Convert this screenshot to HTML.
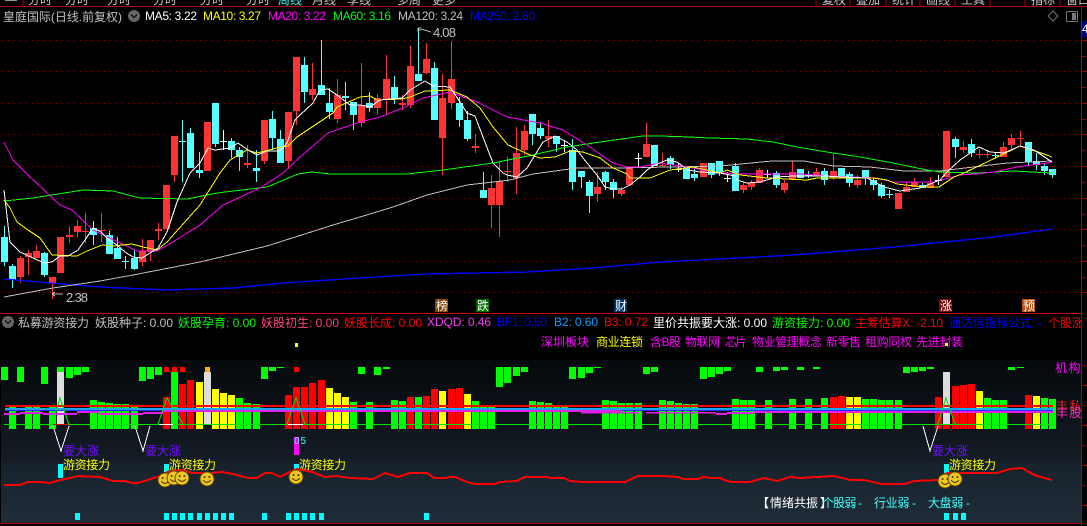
<!DOCTYPE html>
<html><head><meta charset="utf-8"><title>皇庭国际</title>
<style>
html,body{margin:0;padding:0;background:#000;width:1087px;height:526px;overflow:hidden}
svg{display:block}
text{font-family:"Liberation Sans","WenQuanYi Zen Hei","Noto Sans CJK SC",sans-serif;font-size:12px}
</style></head><body>
<svg width="1087" height="526" viewBox="0 0 1087 526" xmlns="http://www.w3.org/2000/svg" shape-rendering="crispEdges">
<defs>
<linearGradient id="g1" x1="0" y1="0" x2="0" y2="1"><stop offset="0" stop-color="#05090c"/><stop offset="1" stop-color="#141c25"/></linearGradient>
<linearGradient id="g2" x1="0" y1="0" x2="0" y2="1"><stop offset="0" stop-color="#16212b"/><stop offset="1" stop-color="#1f2d39"/></linearGradient>
<clipPath id="top"><rect x="0" y="0" width="1087" height="6"/></clipPath>
<clipPath id="rt"><rect x="0" y="0" width="1081" height="526"/></clipPath>
<g id="sm" shape-rendering="auto"><circle r="7" fill="#f2c81e" stroke="#5c4a08" stroke-width="1"/><circle cx="-2.4" cy="-2" r="1" fill="#3a2a00"/><circle cx="2.4" cy="-2" r="1" fill="#3a2a00"/><path d="M-3.8 1.2Q0 5.6 3.8 1.2" fill="none" stroke="#3a2a00" stroke-width="1"/></g>
</defs>
<rect width="1087" height="526" fill="#000"/>

<!-- toolbar -->
<g clip-path="url(#top)" fill="#c8c8c8">
<rect x="5" y="0" width="12" height="1" fill="#999"/>
<text x="28" y="4">分时</text><text x="65" y="4">分时</text><text x="107" y="4">分时</text><text x="153" y="4">分时</text><text x="200" y="4">分时</text><text x="246" y="4">分时</text><text x="278" y="4" fill="#4ff">周线</text><text x="312" y="4">月线</text><text x="347" y="4">季线</text><text x="397" y="4">多周</text><text x="432" y="4">更多</text>
<text x="822" y="4">复权</text><text x="856" y="4">叠加</text><text x="892" y="4">统计</text><text x="926" y="4">画线</text><text x="961" y="4">工具</text><text x="1031" y="4">指标</text><text x="1066" y="4">窗口</text>
</g>
<path d="M23 0v6M816 0v6M850 0v6M886 0v6M920 0v6M955 0v6M990 0v6M1025 0v6M1060 0v6" stroke="#b00000"/>
<rect x="0" y="6" width="1087" height="1" fill="#b00000"/>

<!-- grid -->
<g stroke="#a00000" stroke-dasharray="1 5" fill="none">
<path d="M2 40.5H1081M2 71.5H1081M2 103.5H1081M2 134.5H1081M2 166.5H1081M2 198.5H1081M2 229.5H1081M2 261.5H1081M2 292.5H1081"/>
</g>
<rect x="1081" y="6" width="1" height="520" fill="#b00000"/>
<path d="M1082 40.5h5M1082 56.5h3M1082 71.5h5M1082 87.5h3M1082 103.5h5M1082 119.5h3M1082 134.5h5M1082 150.5h3M1082 166.5h5M1082 182.5h3M1082 198.5h5M1082 214.5h3M1082 229.5h5M1082 245.5h3M1082 261.5h5M1082 277.5h3M1082 292.5h5M1082 385.5h5M1082 405.5h3M1082 425.5h5M1082 445.5h3M1082 465.5h5M1082 365.5h3M1082 485.5h3M1082 505.5h5" stroke="#b00000"/>
<rect x="1082" y="21" width="5" height="16" fill="#000080"/>
<text x="1082" y="33" fill="#fff">4</text>

<!-- header row 1 -->
<text x="3" y="21" fill="#c0c0c0" textLength="119" lengthAdjust="spacing">皇庭国际(日线.前复权)</text>
<circle cx="134" cy="16" r="6" fill="#666" shape-rendering="auto"/>
<path d="M131 14.5l3 3 3-3" stroke="#111" stroke-width="1.3" fill="none" shape-rendering="auto"/>
<text x="145" y="20" fill="#fff" textLength="52">MA5: 3.22</text>
<text x="203" y="20" fill="#ff0" textLength="58">MA10: 3.27</text>
<text x="268" y="20" fill="#f0f" textLength="58">MA20: 3.22</text>
<text x="333" y="20" fill="#0f0" textLength="58">MA60: 3.16</text>
<text x="398" y="20" fill="#c0c0c0" textLength="65">MA120: 3.24</text>
<text x="470" y="20" fill="#00f" textLength="65">MA250: 2.80</text>
<path d="M1053 11l5 5-5 5-5-5z" fill="none" stroke="#777" shape-rendering="auto"/>
<rect x="1066.5" y="11.500" width="11" height="10" fill="none" stroke="#777" rx="1"/>
<rect x="1072" y="13" width="4" height="7" fill="#777"/>

<!-- candles -->
<path fill="#f33" d="
M17 258h7V277h-7zM20 256h1V283h-1z
M25 253h7V257h-7zM28 250h1V275h-1z
M33 251h7V258h-7zM36 245h1V258h-1z
M49 277h7V283h-7zM52 277h1V299h-1z
M57 237h7V273h-7z
M66 235h7V237h-7zM69 226h1V243h-1z
M74 226h7V232h-7zM77 220h1V237h-1z
M82 231h7V232h-7zM85 213h1V243h-1z
M98 230h7V231h-7zM101 213h1V242h-1z
M139 251h7V262h-7zM142 239h1V266h-1z
M147 240h7V252h-7zM150 240h1V261h-1z
M155 229h7V231h-7zM158 223h1V240h-1z
M163 185h7V229h-7z
M171 136h7V175h-7zM174 136h1V182h-1z
M204 122h7V171h-7z
M244 163h7V165h-7zM247 145h1V168h-1z
M261 120h7V161h-7zM264 120h1V164h-1z
M285 112h7V161h-7zM288 112h1V169h-1z
M293 57h7V111h-7zM296 57h1V125h-1z
M309 89h7V95h-7zM312 63h1V100h-1z
M334 95h7V119h-7zM337 79h1V123h-1z
M358 105h7V123h-7zM361 63h1V127h-1z
M374 98h7V108h-7zM377 94h1V114h-1z
M383 79h7V100h-7zM386 55h1V114h-1z
M399 103h7V105h-7zM402 95h1V110h-1z
M407 66h7V105h-7zM410 46h1V108h-1z
M423 59h7V73h-7zM426 43h1V74h-1z
M439 98h7V138h-7zM442 74h1V175h-1z
M448 79h7V103h-7zM451 41h1V109h-1z
M472 146h7V148h-7zM475 134h1V153h-1z
M488 188h7V205h-7zM491 175h1V228h-1z
M496 181h7V205h-7zM499 162h1V237h-1z
M504 171h7V172h-7zM507 157h1V182h-1z
M513 153h7V178h-7zM516 127h1V194h-1z
M521 131h7V150h-7zM524 125h1V155h-1z
M545 136h7V139h-7zM548 120h1V147h-1z
M594 187h7V194h-7zM597 172h1V202h-1z
M618 190h7V194h-7zM621 187h1V196h-1z
M626 168h7V185h-7z
M643 144h7V157h-7zM646 123h1V157h-1z
M659 165h7V166h-7zM662 153h1V167h-1z
M700 163h7V177h-7z
M740 185h7V190h-7zM743 182h1V193h-1z
M748 183h7V187h-7zM751 180h1V190h-1z
M756 170h7V183h-7zM759 168h1V183h-1z
M781 183h7V190h-7zM784 180h1V193h-1z
M789 172h7V180h-7zM792 161h1V180h-1z
M813 172h7V175h-7zM816 168h1V175h-1z
M830 171h7V178h-7zM833 153h1V180h-1z
M854 180h7V185h-7zM857 175h1V188h-1z
M895 193h7V209h-7z
M903 187h7V192h-7zM906 182h1V192h-1z
M911 182h7V187h-7zM914 178h1V187h-1z
M927 183h7V188h-7zM930 177h1V188h-1z
M943 131h7V177h-7z
M960 147h7V150h-7zM963 141h1V153h-1z
M976 154h7V155h-7zM979 149h1V158h-1z
M984 154h7V155h-7zM987 150h1V158h-1z
M1000 147h7V157h-7zM1003 142h1V157h-1z
M1008 138h7V145h-7zM1011 134h1V149h-1z
M1017 138h7V139h-7zM1020 131h1V146h-1z"/>
<path fill="#55ffff" d="
M1 237h7V262h-7zM4 226h1V266h-1z
M9 266h7V280h-7zM12 264h1V288h-1z
M41 253h7V275h-7zM44 252h1V277h-1z
M90 228h7V235h-7zM93 221h1V245h-1z
M106 235h7V254h-7zM109 231h1V254h-1z
M114 248h7V259h-7zM117 237h1V259h-1z
M122 261h7V262h-7zM125 256h1V269h-1z
M131 258h7V269h-7zM134 250h1V270h-1z
M179 141h7V142h-7zM182 120h1V182h-1z
M187 133h7V168h-7zM190 128h1V168h-1z
M196 170h7V173h-7zM199 152h1V178h-1z
M212 103h7V144h-7zM215 103h1V147h-1z
M228 141h7V150h-7zM231 138h1V158h-1z
M236 150h7V157h-7zM239 147h1V171h-1z
M253 168h7V171h-7zM256 150h1V182h-1z
M269 119h7V138h-7zM272 111h1V150h-1z
M277 139h7V163h-7zM280 130h1V163h-1z
M301 65h7V92h-7zM304 57h1V103h-1z
M318 85h7V95h-7zM321 40h1V95h-1z
M326 103h7V112h-7zM329 88h1V119h-1z
M342 96h7V98h-7zM345 82h1V110h-1z
M350 102h7V115h-7zM353 102h1V130h-1z
M366 103h7V108h-7zM369 92h1V112h-1z
M391 87h7V99h-7zM394 76h1V104h-1z
M415 74h7V81h-7zM418 28h1V81h-1z
M431 68h7V120h-7zM434 62h1V120h-1z
M456 103h7V120h-7zM459 97h1V127h-1z
M464 120h7V139h-7zM467 111h1V141h-1z
M480 190h7V198h-7zM483 172h1V198h-1z
M529 114h7V134h-7zM532 114h1V145h-1z
M537 128h7V136h-7zM540 122h1V139h-1z
M553 136h7V144h-7zM556 136h1V152h-1z
M569 150h7V182h-7zM572 139h1V190h-1z
M578 171h7V177h-7zM581 171h1V188h-1z
M586 182h7V196h-7zM589 180h1V213h-1z
M602 172h7V182h-7zM605 171h1V190h-1z
M610 182h7V190h-7zM613 179h1V198h-1z
M651 145h7V166h-7z
M667 158h7V165h-7zM670 156h1V169h-1z
M683 168h7V179h-7z
M691 174h7V178h-7zM694 168h1V181h-1z
M708 163h7V175h-7zM711 163h1V178h-1z
M716 161h7V172h-7zM719 161h1V176h-1z
M732 166h7V191h-7zM735 163h1V191h-1z
M773 173h7V185h-7zM776 171h1V188h-1z
M797 169h7V178h-7z
M805 175h7V176h-7zM808 171h1V178h-1z
M821 171h7V180h-7zM824 168h1V185h-1z
M838 168h7V177h-7z
M846 174h7V183h-7zM849 172h1V187h-1z
M862 170h7V178h-7zM865 170h1V185h-1z
M870 180h7V185h-7zM873 178h1V190h-1z
M878 185h7V196h-7zM881 183h1V198h-1z
M886 194h7V195h-7zM889 190h1V198h-1z
M919 185h7V188h-7zM922 183h1V188h-1z
M952 139h7V147h-7zM955 137h1V158h-1z
M968 144h7V153h-7zM971 139h1V157h-1z
M992 155h7V156h-7zM995 153h1V158h-1z
M1025 142h7V162h-7zM1028 142h1V166h-1z
M1033 161h7V165h-7zM1036 153h1V170h-1z
M1041 166h7V171h-7zM1044 163h1V175h-1z
M1049 169h7V175h-7zM1052 169h1V178h-1z"/>
<path fill="#fff" d="M220 141h7V142h-7zM223 130h1V150h-1zM561 145h7V146h-7zM564 140h1V152h-1zM635 158h7V159h-7zM638 153h1V167h-1zM675 169h7V170h-7zM678 163h1V172h-1zM724 178h7V179h-7zM727 172h1V182h-1zM764 174h7V175h-7zM767 170h1V178h-1zM935 180h7V181h-7zM938 175h1V185h-1z"/>

<!-- moving averages -->
<g fill="none" stroke-width="1">
<polyline stroke="#0000ff" stroke-width="1.4" points="4,279 50,283 100,287 167,290 233,288 283,283 360,278 427,274 527,272 593,268 660,262 720,259 793,255 894,247 994,237 1052,229"/>
<polyline stroke="#c0c0c0" points="4,297 53,288 100,281 133,275 200,262 267,246 333,225 360,217 393,207 427,195 467,185 510,180 533,174 577,168 620,168 720,166 772,161 804,161 834,166 870,167 904,171 940,171 1007,163 1052,161"/>
<polyline stroke="#00ff00" points="4,201 33,198 83,190 113,191 140,198 187,199 217,193 267,187 298,174 312,172 330,174 407,174 443,170 493,163 533,155 567,147 600,142 643,136 660,136 690,137 710,138 747,139 773,142 797,147 827,152 860,157 893,163 927,170 940,172 977,173 1013,171 1052,173"/>
<polyline stroke="#ff00ff" points="4,142 13,160 28,175 60,205 72,210 93,230 120,243 137,251 157,251 173,242 200,225 223,205 260,188 283,173 300,157 328,133 360,122 380,117 403,108 423,98 450,92 477,102 507,117 540,123 563,130 587,145 613,163 627,167 640,167 660,163 687,167 720,173 747,174 803,174 827,176 877,178 893,182 934,182 960,175 975,174 994,172 1017,167 1047,163 1052,162"/>
<polyline stroke="#ffff00" points="4,200 10,208 17,222 28,230 40,238 52,255 77,256 87,251 102,245 113,246 132,244 143,247 157,250 167,242 200,205 220,173 230,160 247,150 257,153 277,148 288,146 297,137 333,113 337,107 360,97 370,96 377,100 402,99 410,97 425,91 450,90 467,97 480,108 493,127 508,145 530,155 540,158 555,157 570,151 583,152 600,158 613,168 627,174 630,178 650,178 670,170 693,167 720,173 727,170 740,175 767,178 807,180 817,178 873,178 887,180 897,184 923,187 939,187 954,177 964,173 987,162 1020,146 1047,155 1052,157"/>
<polyline stroke="#ffffff" points="4,190 10,242 20,252 33,258 44,263 52,262 60,256 68,256 78,250 85,240 93,228 101,232 109,240 117,245 125,252 133,257 142,258 150,253 158,248 167,232 177,202 190,173 200,163 208,148 215,150 230,148 238,143 248,150 257,155 267,151 280,151 287,143 295,120 300,115 313,103 320,90 328,89 337,95 350,105 360,105 370,107 380,100 402,98 410,90 425,81 433,86 450,87 460,102 467,113 475,116 483,137 493,163 503,173 507,175 517,177 527,168 543,142 555,136 567,142 577,150 587,163 597,175 605,187 613,189 622,189 630,185 640,177 647,170 655,165 667,160 677,162 688,170 700,172 720,173 735,176 737,180 747,183 760,182 777,177 793,176 824,176 843,177 867,178 884,187 900,191 920,188 940,180 947,172 960,160 979,147 990,152 1004,153 1020,146 1034,150 1052,162"/>
</g>

<!-- annotations -->
<path d="M418 28v4M418 28h3M418 30h3M421 29l10 3" stroke="#c0c0c0" fill="none"/>
<text x="433" y="37" fill="#c0c0c0" textLength="23" style="font-size:13px">4.08</text>
<path d="M52 294h11M52 294l3-2M52 294l3 2" stroke="#c0c0c0" fill="none"/>
<text x="66" y="302" fill="#c0c0c0" textLength="22" style="font-size:13px">2.38</text>

<!-- tags -->
<rect x="435" y="299" width="13" height="13" fill="#804000"/><text x="436" y="310" fill="#fff">榜</text>
<rect x="476" y="299" width="13" height="13" fill="#006a00"/><text x="477" y="310" fill="#fff">跌</text>
<rect x="614" y="299" width="13" height="13" fill="#003060"/><text x="615" y="310" fill="#fff">财</text>
<rect x="939" y="299" width="13" height="13" fill="#780808"/><text x="940" y="310" fill="#fff">涨</text>
<rect x="1022" y="299" width="13" height="13" fill="#b85010"/><text x="1023" y="310" fill="#fff">预</text>

<rect x="0" y="313" width="1081" height="1" fill="#d00000"/>

<!-- header row 2 -->
<circle cx="8" cy="322" r="6" fill="#666" shape-rendering="auto"/>
<path d="M5 320.5l3 3 3-3" stroke="#111" stroke-width="1.3" fill="none" shape-rendering="auto"/>
<g clip-path="url(#rt)">
<text x="18" y="327" fill="#c0c0c0" textLength="71">私募游资接力</text>
<text x="95" y="327" fill="#c0c0c0" textLength="78">妖股种子: 0.00</text>
<text x="178" y="327" fill="#0f0" textLength="78">妖股孕育: 0.00</text>
<text x="261" y="327" fill="#ff4080" textLength="78">妖股初生: 0.00</text>
<text x="344" y="327" fill="#f00" textLength="78">妖股长成: 0.00</text>
<text x="427" y="326" fill="#f33cf3" textLength="64">XDQD: 0.46</text>
<text x="497" y="326" fill="#00f" textLength="50">BF1: 0.50</text>
<text x="554" y="326" fill="#00a0ff" textLength="44">B2: 0.60</text>
<text x="604" y="326" fill="#f00" textLength="44">B3: 0.72</text>
<text x="653" y="327" fill="#fff" textLength="114">里价共振要大涨: 0.00</text>
<text x="772" y="327" fill="#0f0" textLength="78">游资接力: 0.00</text>
<text x="855" y="327" fill="#f00" textLength="88">主筹估算X: -2.10</text>
<text x="949" y="327" fill="#0000ff" textLength="93">通达信指标公式: -</text>
<text x="1048" y="327" fill="#f00" textLength="36">个股涨</text>
</g>
<!-- row 3 -->
<text x="541" y="346" fill="#f0f" textLength="48">深圳板块</text>
<text x="596" y="346" fill="#ff0" textLength="47">商业连锁</text>
<text x="650" y="346" fill="#f0f" textLength="31">含B股</text>
<text x="685" y="346" fill="#f0f" textLength="35">物联网</text>
<text x="725" y="346" fill="#f0f" textLength="22">芯片</text>
<text x="752" y="346" fill="#f0f" textLength="70">物业管理概念</text>
<text x="826" y="346" fill="#f0f" textLength="35">新零售</text>
<text x="865" y="346" fill="#f0f" textLength="47">租购同权</text>
<text x="916" y="346" fill="#f0f" textLength="47">先进封装</text>
<rect x="945" y="343" width="3" height="3" fill="#ff0"/>
<rect x="295" y="343" width="3" height="4" fill="#ff0"/>

<!-- lower panel background -->
<rect x="1" y="360" width="1080" height="102" fill="url(#g1)"/>
<rect x="1" y="462" width="1080" height="61" fill="url(#g2)"/>
<rect x="0" y="523" width="1081" height="1" fill="#b00000"/>

<!-- hanging bars -->
<path fill="#0f0" d="M1 367h7v13h-7zM17 367h7v15h-7zM41 367h7v17h-7zM57 367h7v5h-7zM66 367h7v11h-7zM74 367h7v8h-7zM82 367h7v5h-7zM139 367h7v14h-7zM147 367h7v12h-7zM155 367h7v8h-7zM261 367h7v12h-7zM269 367h7v4h-7zM277 367h7v1h-7zM358 367h7v7h-7zM374 367h7v8h-7zM383 367h7v2h-7zM496 367h7v20h-7zM504 367h7v16h-7zM513 367h7v9h-7zM521 367h7v5h-7zM569 367h7v12h-7zM578 367h7v11h-7zM586 367h7v6h-7zM594 367h7v1h-7zM643 367h7v7h-7zM651 367h7v5h-7zM700 367h7v12h-7zM708 367h7v10h-7zM716 367h7v7h-7zM724 367h7v4h-7zM756 367h7v5h-7zM773 367h7v4h-7zM781 367h7v3h-7zM797 367h7v3h-7zM813 367h7v2h-7zM903 367h7v6h-7zM911 367h7v5h-7zM919 367h7v4h-7zM927 367h7v2h-7zM1008 367h7v3h-7zM1017 367h7v1h-7z"/>
<path fill="#f00" d="M164 367h5v5h-5zM172 367h5v5h-5zM180 367h5v5h-5zM294 367h5v5h-5z"/>
<rect x="205" y="367" width="5" height="5" fill="#ffb000"/>

<!-- standing bars -->
<path fill="#0f0" d="M9 406h7v23h-7zM25 406h7v23h-7zM33 406h7v23h-7zM49 406h7v23h-7zM90 400h7v29h-7zM98 402h7v27h-7zM106 403h7v26h-7zM114 404h7v25h-7zM122 404h7v25h-7zM131 406h7v23h-7zM171 372h7v57h-7zM236 398h7v31h-7zM244 403h7v26h-7zM253 404h7v25h-7zM350 402h7v27h-7zM366 402h7v27h-7zM391 400h7v29h-7zM399 401h7v28h-7zM415 397h7v32h-7zM472 401h7v28h-7zM480 406h7v23h-7zM488 406h7v23h-7zM529 401h7v28h-7zM537 402h7v27h-7zM545 403h7v26h-7zM553 406h7v23h-7zM561 406h7v23h-7zM602 400h7v29h-7zM610 401h7v28h-7zM618 403h7v26h-7zM626 403h7v26h-7zM635 403h7v26h-7zM659 400h7v29h-7zM667 401h7v28h-7zM675 403h7v26h-7zM683 404h7v25h-7zM691 404h7v25h-7zM732 399h7v30h-7zM740 400h7v29h-7zM748 400h7v29h-7zM765 400h7v29h-7zM789 399h7v30h-7zM805 399h7v30h-7zM821 398h7v31h-7zM862 399h7v30h-7zM870 399h7v30h-7zM878 400h7v29h-7zM886 400h7v29h-7zM895 400h7v29h-7zM984 398h7v31h-7zM992 400h7v29h-7zM1000 400h7v29h-7zM1041 398h7v31h-7zM1049 399h7v30h-7z"/>
<path fill="#f00" d="M163 397h7v32h-7zM179 384h7v45h-7zM187 380h7v49h-7zM285 395h7v34h-7zM293 387h7v42h-7zM301 387h7v42h-7zM309 383h7v46h-7zM318 380h7v49h-7zM407 397h7v32h-7zM423 396h7v33h-7zM431 389h7v40h-7zM448 389h7v40h-7zM456 388h7v41h-7zM830 397h7v32h-7zM838 396h7v33h-7zM935 397h7v32h-7zM943 425h7v4h-7zM952 386h7v43h-7zM960 385h7v44h-7zM968 384h7v45h-7zM1025 395h7v34h-7z"/>
<path fill="#ff0" d="M196 382h7v47h-7zM212 389h7v40h-7zM220 393h7v36h-7zM228 395h7v34h-7zM326 388h7v41h-7zM334 393h7v36h-7zM342 397h7v32h-7zM439 391h7v38h-7zM464 394h7v35h-7zM846 397h7v32h-7zM854 397h7v32h-7zM976 391h7v38h-7zM1033 396h7v33h-7z"/>
<path fill="#ddd" d="M57 372h7v53h-7zM204 372h7v53h-7zM943 372h7v53h-7z"/>

<!-- horizontal indicator lines -->
<rect x="5" y="405" width="1048" height="2" fill="#f00"/>
<rect x="5" y="408" width="1048" height="2" fill="#1aa5ff"/>
<rect x="5" y="410" width="1048" height="1" fill="#2a2aff"/>
<path fill="#e020e8" d="M4 413h16v2H4zM20 412h23v2H20zM43 413h34v2H43zM77 411h23v2H77zM100 413h43v2h-43zM143 412h20v2h-20zM163 410h357v2H163zM520 410h102v2H520zM581 412h58v1.500h-58zM646 412h70v1.500h-70zM716 413h11v2h-11zM727 412h27v2h-27zM754 411h299v2H754z"/>
<rect x="4" y="424" width="1049" height="1" fill="#00e000"/>
<rect x="159" y="424" width="14" height="1" fill="#fff"/>
<rect x="288" y="424" width="15" height="1" fill="#fff"/>
<rect x="53" y="424" width="16" height="1" fill="#e00000"/>

<!-- triangles and V marks -->
<g fill="none" stroke="#00e000">
<polyline points="52,425 60,398 69,425"/><polyline points="158,424 167,398 183,424"/><polyline points="287,424 296,398 305,424"/><polyline points="938,424 946,398 955,424"/>
</g>
<g fill="none" stroke="#fff">
<polyline points="53,426 61,451 69,426"/><polyline points="135,426 143,451 150,426"/><polyline points="923,426 930,451 938,426"/>
</g>

<!-- labels -->
<text x="63" y="455" fill="#7010ff" textLength="36">要大涨</text>
<text x="145" y="455" fill="#7010ff" textLength="36">要大涨</text>
<text x="932" y="455" fill="#7010ff" textLength="36">要大涨</text>
<rect x="294" y="437" width="5" height="18" fill="#f0f"/>
<text x="294" y="444" fill="#4ff" textLength="12" style="font-size:10px">05</text>
<path fill="#0ff" d="M58 464h5v14h-5zM164 464h5v8h-5zM294 464h5v6h-5zM944 464h5v9h-5z"/>
<text x="63" y="469" fill="#ff0" textLength="47">游资接力</text>
<text x="169" y="469" fill="#ff0" textLength="47">游资接力</text>
<text x="299" y="469" fill="#ff0" textLength="47">游资接力</text>
<text x="949" y="469" fill="#ff0" textLength="47">游资接力</text>

<!-- red curve -->
<polyline fill="none" stroke="#f00" stroke-width="2" points="4,485 20,485 28,482 40,482 50,483 60,480 70,478 78,476 100,477 113,481 125,481 132,483 138,483 157,477 170,471 183,470 192,473 210,473 222,472 233,474 248,478 257,478 265,473 272,473 280,477 292,471 297,469 312,472 325,477 337,476 350,478 373,479 385,473 398,477 410,473 427,473 434,478 447,478 448,477 455,477 467,482 475,484 495,484 500,482 517,481 525,477 548,477 550,478 564,478 570,481 582,482 625,482 638,476 662,476 678,477 683,479 698,479 703,477 712,478 720,478 727,481 732,482 750,482 764,478 777,481 790,477 800,478 834,476 850,480 864,480 882,484 905,484 914,481 939,480 947,473 972,473 997,473 1010,469 1022,468 1034,475 1052,480"/>

<!-- smileys -->
<use href="#sm" x="165" y="480"/><use href="#sm" x="174" y="478"/><use href="#sm" x="182" y="478"/><use href="#sm" x="207" y="479"/><use href="#sm" x="296" y="477"/><use href="#sm" x="945" y="481"/><use href="#sm" x="955" y="479"/>

<!-- bottom cyan squares -->
<path fill="#0ff" d="M75 513h5v7h-5zM164 513h5v7h-5zM172 513h5v7h-5zM180 513h5v7h-5zM188 513h5v7h-5zM197 513h5v7h-5zM205 513h5v7h-5zM213 513h5v7h-5zM221 513h5v7h-5zM229 513h5v7h-5zM262 513h5v7h-5zM286 513h5v7h-5zM294 513h5v7h-5zM302 513h5v7h-5zM310 513h5v7h-5zM319 513h5v7h-5zM424 513h5v7h-5zM944 513h5v7h-5zM953 513h5v7h-5zM961 513h5v7h-5z"/>

<!-- bottom text -->
<text x="757" y="507" fill="#fff" font-weight="bold">【</text>
<text x="770" y="507" fill="#fff" textLength="48">情绪共振</text>
<text x="820" y="507" fill="#fff" font-weight="bold">】</text>
<text x="822" y="507" fill="#4ff" textLength="40">个股弱 -</text>
<text x="874" y="507" fill="#4ff" textLength="42">行业弱 -</text>
<text x="928" y="507" fill="#4ff" textLength="42">大盘弱 -</text>

<!-- right clipped labels -->
<g clip-path="url(#rt)">
<text x="1055" y="372" fill="#f0f" textLength="39">机构持</text>
<text x="1056" y="410" fill="#e02020" textLength="39">丰私募</text>
<text x="1056" y="417" fill="#ff30c0" textLength="39">丰股票</text>
</g>
</svg>
</body></html>
